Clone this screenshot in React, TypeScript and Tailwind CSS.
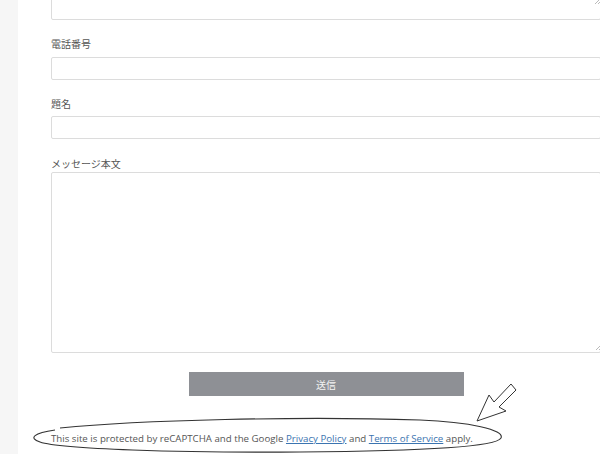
import React from "react";

const jp = { fontFamily: '"Noto Sans CJK JP", "Noto Sans", sans-serif' };
const en = { fontFamily: '"Open Sans", "Noto Sans", sans-serif' };

export default function App() {
  return (
    <div className="relative w-[600px] h-[454px] overflow-hidden bg-white flex">
      <div className="w-[18px] shrink-0 bg-[#f6f6f6]" />
      <div className="flex-1 pl-[33px] flex flex-col w-[582px]">
        <div className="w-[550px]">
          <div className="relative mt-[-2px] h-[22px] border border-[#dcdcdc] rounded-[2px] bg-white">
            <svg className="absolute right-[-2px] top-[-1px]" width="8" height="8" viewBox="0 0 8 8">
              <line x1="1" y1="6" x2="7" y2="0" stroke="#bbb" strokeWidth="1" />
              <line x1="4" y1="6" x2="7" y2="3" stroke="#bbb" strokeWidth="1" />
            </svg>
          </div>

          <div className="mt-[16px] h-[16px] leading-[16px] text-[10px] text-[#555]" style={jp}>電話番号</div>
          <div className="mt-[5px] h-[23px] border border-[#dcdcdc] rounded-[2px] bg-white" />

          <div className="mt-[16px] h-[16px] leading-[16px] text-[10px] text-[#555]" style={jp}>題名</div>
          <div className="mt-[4px] h-[23px] border border-[#dcdcdc] rounded-[2px] bg-white" />

          <div className="mt-[17px] h-[16px] leading-[16px] text-[10px] text-[#555]" style={jp}>メッセージ本文</div>
          <div className="relative mt-[0px] h-[181px] border border-[#dcdcdc] rounded-[2px] bg-white">
            <svg className="absolute right-[-3px] bottom-[1px]" width="8" height="8" viewBox="0 0 8 8">
              <line x1="1" y1="7" x2="7" y2="1" stroke="#bbb" strokeWidth="1" />
              <line x1="4" y1="7" x2="7" y2="4" stroke="#bbb" strokeWidth="1" />
            </svg>
          </div>

          <div className="mt-[19px] flex justify-center">
            <div className="w-[275px] h-[24px] bg-[#8e9095] flex items-center justify-center text-[10px] text-[#f4f4f4]" style={jp}>
              送信
            </div>
          </div>

          <div className="mt-[36px] text-[9.7px] leading-[14px] text-[#555] whitespace-nowrap" style={en}>
            This site is protected by reCAPTCHA and the Google{" "}
            <span className="text-[#3b74b0] underline">Privacy Policy</span> and{" "}
            <span className="text-[#3b74b0] underline">Terms of Service</span> apply.
          </div>
        </div>
      </div>

      <svg className="absolute left-0 top-0 pointer-events-none" width="600" height="454" viewBox="0 0 600 454">
        <path
          d="M60 428 C 140 420, 300 416, 420 420 C 470 422, 505 430, 501 438 C 497 446, 430 451, 300 452 C 180 453, 60 449, 40 442 C 28 438, 34 433, 55 430"
          fill="none"
          stroke="#333"
          strokeWidth="1.1"
        />
        <polygon
          points="477,421 489,395 494,402 511,384 516,390 499,407 506,411"
          fill="white"
          stroke="#333"
          strokeWidth="1"
          strokeLinejoin="miter"
        />
      </svg>
    </div>
  );
}
